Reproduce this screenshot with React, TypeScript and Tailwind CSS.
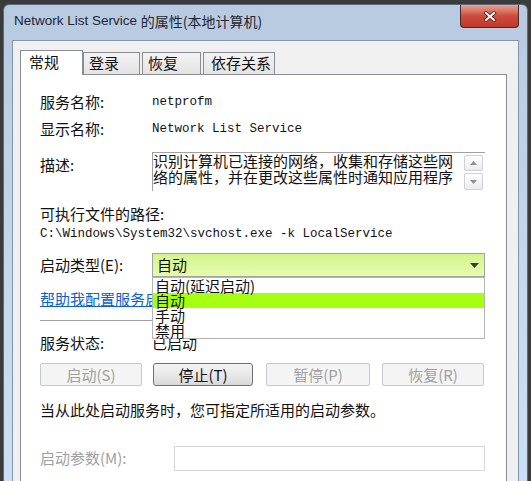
import React from "react";

const CJK = "font-['Noto_Sans_CJK_SC',sans-serif]";
const MONO = "font-['Liberation_Mono','Noto_Sans_CJK_SC',monospace]";

function Btn({ label, w, ml, enabled }: { label: string; w: string; ml: string; enabled?: boolean }) {
  return (
    <div
      className={
        enabled
          ? `${w} ${ml} flex h-[23px] items-center justify-center rounded-[3px] border border-[#707070] bg-gradient-to-b from-[#f3f3f3] via-[#e9e9e9] to-[#d9d9d9] text-[15px] leading-none text-[#111]`
          : `${w} ${ml} flex h-[23px] items-center justify-center rounded-[2px] border border-[#c6c9cc] bg-[#f4f4f4] text-[15px] leading-none text-[#a0a0a0]`
      }
    >
      {label}
    </div>
  );
}

function Tab({ label, w, pl, selected }: { label: string; w: string; pl: string; selected?: boolean }) {
  return selected ? (
    <div
      className={`${w} ${pl} relative z-10 -mb-px flex h-[25px] items-center border-l border-r border-t border-[#898c95] bg-white pb-[2px] text-[15px]`}
    >
      {label}
    </div>
  ) : (
    <div
      className={`${w} ${pl} flex h-[22px] items-center border-l border-r border-t border-[#898c95] bg-gradient-to-b from-[#f3f3f3] to-[#e3e3e3] text-[15px]`}
    >
      {label}
    </div>
  );
}

export default function App() {
  return (
    <div className={`${CJK} h-[481px] w-[531px] overflow-hidden bg-[#3b3b3b] px-[3px] pt-[4px] text-[#111]`}>
      <div className="flex h-[540px] flex-col rounded-t-[6px] border border-[#5b6b7e] bg-gradient-to-b from-[#b7cadf] via-[#c6d8eb] to-[#cde1f6] px-[8px]">
        {/* title bar */}
        <div className="flex h-[35px] items-start justify-between">
          <div className="mt-[7px] flex h-[18px] items-center pl-[2px] text-[#1f2633]">
            <span className="font-['Liberation_Sans',sans-serif] text-[13.5px]">Network List Service&nbsp;</span>
            <span className="text-[14px]">的属性(本地计算机)</span>
          </div>
          <div className="flex h-[23px] w-[59px] items-center justify-center rounded-b-[4px] border border-t-0 border-[#4a2a28] bg-gradient-to-b from-[#e7a196] via-[#cc4b3b] to-[#c0392a]">
            <svg width="14" height="11" viewBox="0 0 14 11">
              <path d="M3 2 L11 9 M11 2 L3 9" stroke="#5a1a12" strokeWidth="3.6" strokeLinecap="square" />
              <path d="M3 2 L11 9 M11 2 L3 9" stroke="#ffffff" strokeWidth="2" strokeLinecap="square" />
            </svg>
          </div>
        </div>

        {/* content */}
        <div className="flex-1 border border-[#8196ac] bg-[#f0f0f0] pl-[7px] pr-[11px] pt-[9px]">
          {/* tabs */}
          <div className="flex items-end">
            <Tab label="常规" w="w-[63px]" pl="pl-[8px]" selected />
            <Tab label="登录" w="w-[57px]" pl="pl-[5px]" />
            <div className="w-[2px]" />
            <Tab label="恢复" w="w-[59px]" pl="pl-[5px]" />
            <div className="w-[2px]" />
            <Tab label="依存关系" w="w-[72px]" pl="pl-[7px]" />
          </div>

          {/* panel */}
          <div className="h-[430px] w-[487px] border border-[#898c95] bg-white pl-[19px] pr-[21px] pt-[17px]">
            <div className="flex h-[20px] items-center">
              <div className="w-[112px] text-[15px]">服务名称:</div>
              <div className={`${MONO} text-[12.5px]`}>netprofm</div>
            </div>
            <div className="mt-[7px] flex h-[20px] items-center">
              <div className="w-[112px] text-[15px]">显示名称:</div>
              <div className={`${MONO} text-[12.5px]`}>Network List Service</div>
            </div>
            <div className="mt-[13px] flex h-[39px]">
              <div className="mt-[3px] flex h-[20px] w-[112px] items-center text-[15px]">描述:</div>
              <div className="flex h-[39px] w-[333px] border-l border-t border-[#a0a0a0]">
                <div className="flex-1 whitespace-nowrap text-[15px] leading-[16px]">
                  识别计算机已连接的网络，收集和存储这些网
                  <br />
                  络的属性，并在更改这些属性时通知应用程序
                </div>
                <div className="mr-[2px] flex w-[19px] flex-col gap-[2px] pt-[2px]">
                  <div className="flex h-[16px] items-center justify-center rounded-[2px] border border-[#cfd2d5] bg-gradient-to-b from-[#ffffff] to-[#ececec]">
                    <svg width="7" height="4" viewBox="0 0 7 4">
                      <path d="M0 4 L3.5 0 L7 4 Z" fill="#8c8f93" />
                    </svg>
                  </div>
                  <div className="flex h-[17px] items-center justify-center rounded-[2px] border border-[#cfd2d5] bg-gradient-to-b from-[#ffffff] to-[#ececec]">
                    <svg width="7" height="4" viewBox="0 0 7 4">
                      <path d="M0 0 L7 0 L3.5 4 Z" fill="#8c8f93" />
                    </svg>
                  </div>
                </div>
              </div>
            </div>
            <div className="mt-[13px] flex h-[20px] items-center text-[15px]">可执行文件的路径:</div>
            <div className={`${MONO} flex h-[20px] items-center text-[12.5px]`}>
              C:\Windows\System32\svchost.exe -k LocalService
            </div>
            <div className="mt-[9px] flex h-[24px] items-center">
              <div className="w-[112px] text-[15px]">启动类型(E):</div>
              <div className="relative flex h-[24px] w-[333px] items-center justify-between border border-[#a3a3a3] bg-gradient-to-b from-[#d4f58c] to-[#e6fcad] pl-[4px] pr-[5px]">
                <span className="text-[15px]">自动</span>
                <svg width="9" height="5" viewBox="0 0 9 5">
                  <path d="M0 0 L9 0 L4.5 5 Z" fill="#3c3c3c" />
                </svg>
                <div className="absolute left-[-1px] top-[23px] z-10 w-[333px] border border-[#b4b4b4] bg-white text-[15px] leading-[15px]">
                  <div className="h-[15px] pl-[2px]">自动(延迟启动)</div>
                  <div className="h-[15px] bg-[#a6ff10] pl-[2px]">自动</div>
                  <div className="h-[15px] pl-[2px]">手动</div>
                  <div className="h-[15px] pl-[2px]">禁用</div>
                </div>
              </div>
            </div>
            <div className="mt-[12px] flex h-[20px] items-center">
              <span className="text-[15px] text-[#0a64c8] underline">帮助我配置服务启动选项。</span>
            </div>
            <div className="mt-[11px] h-px bg-[#a0a0a0]" />
            <div className="mt-[12px] flex h-[20px] items-center">
              <div className="w-[112px] text-[15px]">服务状态:</div>
              <div className="text-[15px]">已启动</div>
            </div>
            <div className="mt-[10px] flex">
              <Btn label="启动(S)" w="w-[102px]" ml="ml-0" />
              <Btn label="停止(T)" w="w-[100px]" ml="ml-[11px]" enabled />
              <Btn label="暂停(P)" w="w-[104px]" ml="ml-[13px]" />
              <Btn label="恢复(R)" w="w-[102px]" ml="ml-[12px]" />
            </div>
            <div className="mt-[14px] flex h-[20px] items-center text-[15px]">
              当从此处启动服务时，您可指定所适用的启动参数。
            </div>
            <div className="mt-[26px] flex h-[25px] items-center">
              <div className="w-[134px] text-[15px] text-[#a0a0a0]">启动参数(M):</div>
              <div className="h-[25px] w-[311px] border border-[#d9d9d9] bg-white" />
            </div>
          </div>
        </div>
      </div>
    </div>
  );
}
